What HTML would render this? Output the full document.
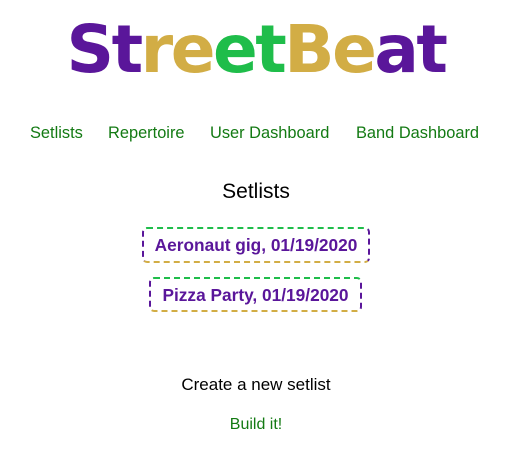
<!DOCTYPE html>
<html><head><style>
body{margin:0;width:512px;height:465px;background:#fff;font-family:"Liberation Sans",sans-serif;position:relative;overflow:hidden}
.logo{position:absolute;left:0;width:512px;top:10px;text-align:center;font-family:"DejaVu Sans",sans-serif;font-weight:bold;font-size:66px;letter-spacing:-2.5px;line-height:80px}
.p{color:#5a169a}.g{color:#d2ad45}.n{color:#1fbd4a}
.nav{position:absolute;top:124px;font-size:16.4px;color:#137a13}
h2{position:absolute;top:180px;left:0;width:512px;text-align:center;margin:0;font-size:21px;font-weight:normal;color:#000}
.box{position:absolute;border:2px dashed #5a169a;border-top-color:#1fbd4a;border-bottom-color:#d2ad45;border-radius:5px;color:#5a169a;font-size:17.3px;font-weight:bold;box-sizing:border-box;text-align:center;line-height:32px;white-space:nowrap}
.c{position:absolute;left:0;width:512px;text-align:center}
</style></head><body>
<div class="logo"><span class="p">St</span><span class="g">re</span><span class="n">et</span><span class="g">Be</span><span class="p">at</span></div>
<div class="nav" style="left:30px">Setlists</div>
<div class="nav" style="left:108px">Repertoire</div>
<div class="nav" style="left:210px">User Dashboard</div>
<div class="nav" style="left:356px">Band Dashboard</div>
<h2>Setlists</h2>
<div class="box" style="left:142px;top:227px;width:228px;height:36px">Aeronaut gig, 01/19/2020</div>
<div class="box" style="left:149px;top:277px;width:213px;height:35px">Pizza Party, 01/19/2020</div>
<div class="c" style="top:375px;font-size:17px;color:#000">Create a new setlist</div>
<div class="c" style="top:416px;font-size:16px;color:#137a13">Build it!</div>
</body></html>
